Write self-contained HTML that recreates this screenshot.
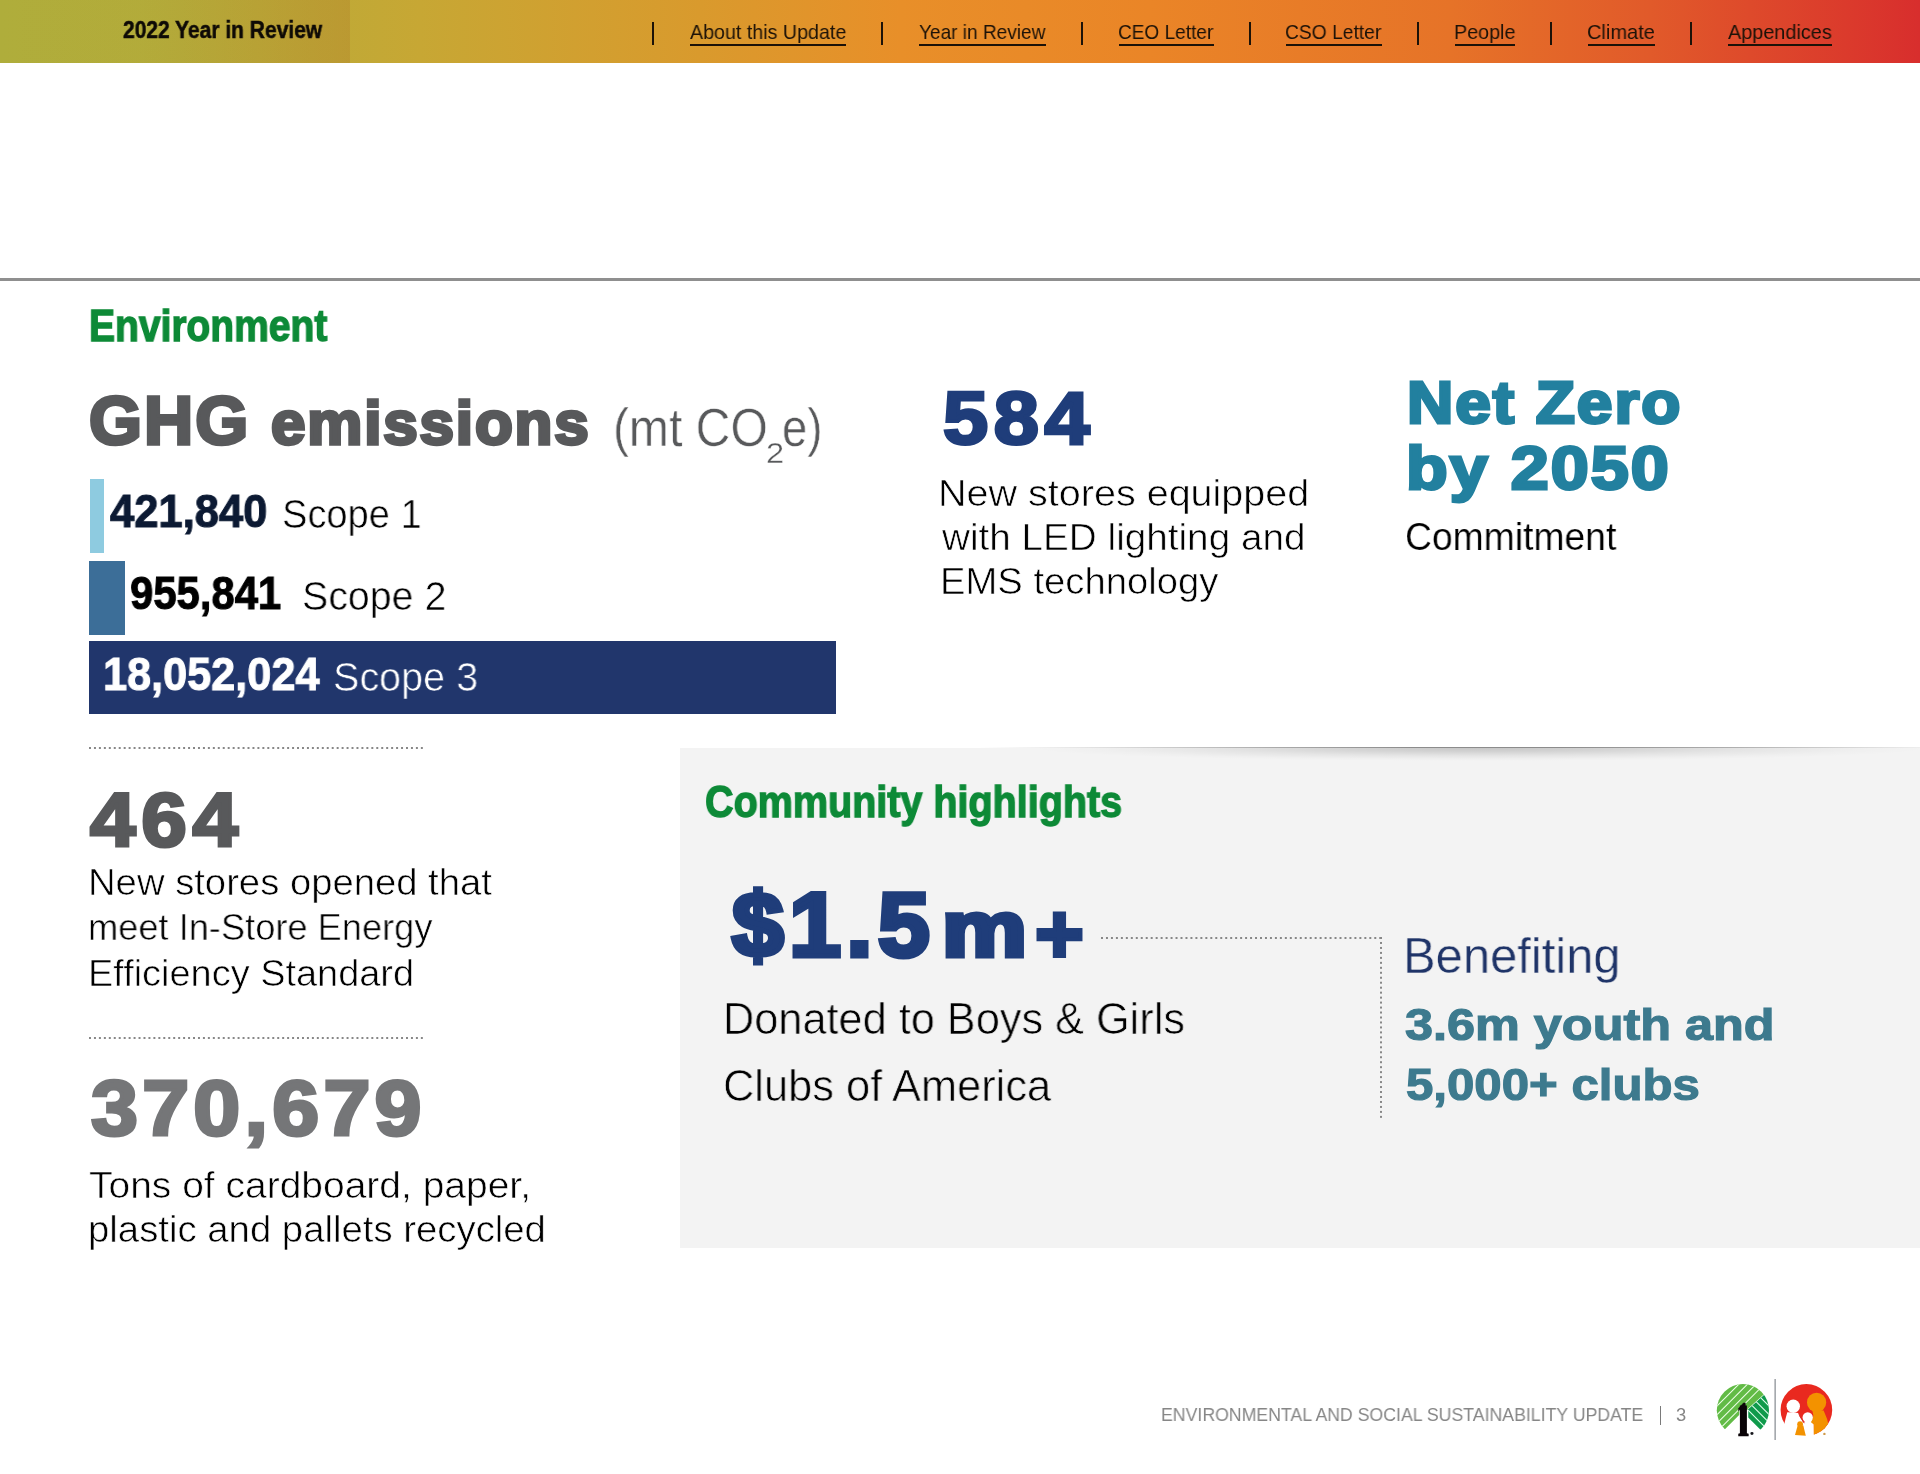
<!DOCTYPE html>
<html lang="en">
<head>
<meta charset="utf-8">
<title>2022 Year in Review - Environmental and Social Sustainability Update</title>
<style>
html,body{margin:0;padding:0;background:#fff;}
h1,h2,h3,p,nav,main,section,footer{margin:0;padding:0;font-size:inherit;font-weight:inherit;}
body{width:1920px;height:1474px;position:relative;overflow:hidden;font-family:"Liberation Sans",Arial,Helvetica,sans-serif;}
.t{position:absolute;white-space:nowrap;will-change:transform;transform-origin:0 0;margin:0;padding:0;font-weight:400;text-decoration:none;display:block;}
.abs{position:absolute;}
header{position:absolute;left:0;top:0;width:1920px;height:62.5px;
 background:linear-gradient(90deg,#afad3b 0px,#b4ac3a 180px,#bdaa37 300px,#c7a734 420px,#d99a2d 700px,#e88f29 900px,#ea8527 1150px,#e67328 1450px,#e15a2a 1650px,#db3a2c 1850px,#d82e2d 1920px);}
header .tab{position:absolute;left:0;top:0;width:350px;height:62.5px;background:linear-gradient(90deg,rgba(175,120,40,0) 0%,rgba(175,120,40,0.02) 40%,rgba(175,120,40,0.16) 70%,rgba(175,120,40,0.32) 100%);}
.pipe{position:absolute;top:22px;height:22.5px;width:2px;background:#1c1208;}
.ul{position:absolute;top:43.8px;height:2.2px;background:#1c1208;}
.rule{position:absolute;left:0;top:278px;width:1920px;height:3px;background:#8f8f8f;}
.dots{position:absolute;height:2px;background-image:linear-gradient(90deg,#878787 2px,rgba(135,135,135,0) 2px);background-size:5px 2px;background-repeat:repeat-x;}
.vdots{position:absolute;width:2px;background-image:linear-gradient(180deg,#878787 2px,rgba(135,135,135,0) 2px);background-size:2px 5px;background-repeat:repeat-y;}
.community{position:absolute;left:680px;top:748px;width:1240px;height:500px;background:#f3f3f3;overflow:hidden;}
.community .shade{position:absolute;left:350px;top:0;width:900px;height:13px;background:radial-gradient(ellipse 50% 100% at 50% 0%,rgba(0,0,0,0.19) 0%,rgba(0,0,0,0.13) 30%,rgba(0,0,0,0.06) 60%,rgba(0,0,0,0.015) 85%,rgba(0,0,0,0) 100%);}
.shadeline{position:absolute;left:980px;top:747px;width:940px;height:1px;background:linear-gradient(90deg,rgba(140,140,140,0) 0%,rgba(140,140,140,0.3) 14%,rgba(140,140,140,0.75) 32%,rgba(140,140,140,1) 46%,rgba(140,140,140,1) 62%,rgba(140,140,140,0.7) 80%,rgba(140,140,140,0.35) 93%,rgba(140,140,140,0.15) 100%);}
</style>
</head>
<body>
<header>
<div class="tab"></div>
<h1 class="t" style="left:122.89px;top:15.57px;font-size:23.69px;line-height:28.43px;color:#0e0a06;transform:scaleX(0.8860);font-weight:700;-webkit-text-stroke:0.5px #0e0a06;">2022 Year in Review</h1>
<nav>
<span class="pipe" style="left:651.50px"></span><a class="t nav" style="left:689.96px;top:18.76px;font-size:20.93px;line-height:25.12px;color:#1c1208;transform:scaleX(0.9400);">About this Update</a><span class="ul" style="left:689.5px;width:156.5px"></span>
<span class="pipe" style="left:880.75px"></span><a class="t nav" style="left:918.58px;top:18.76px;font-size:20.93px;line-height:25.12px;color:#1c1208;transform:scaleX(0.9102);">Year in Review</a><span class="ul" style="left:918.5px;width:127.0px"></span>
<span class="pipe" style="left:1080.75px"></span><a class="t nav" style="left:1118.03px;top:18.76px;font-size:20.93px;line-height:25.12px;color:#1c1208;transform:scaleX(0.9101);">CEO Letter</a><span class="ul" style="left:1118.5px;width:95.0px"></span>
<span class="pipe" style="left:1248.50px"></span><a class="t nav" style="left:1285.02px;top:18.76px;font-size:20.93px;line-height:25.12px;color:#1c1208;transform:scaleX(0.9198);">CSO Letter</a><span class="ul" style="left:1285.5px;width:96.0px"></span>
<span class="pipe" style="left:1417.00px"></span><a class="t nav" style="left:1453.88px;top:18.76px;font-size:20.93px;line-height:25.12px;color:#1c1208;transform:scaleX(0.9436);">People</a><span class="ul" style="left:1455.0px;width:60.0px"></span>
<span class="pipe" style="left:1550.00px"></span><a class="t nav" style="left:1586.98px;top:18.76px;font-size:20.93px;line-height:25.12px;color:#1c1208;transform:scaleX(0.9572);">Climate</a><span class="ul" style="left:1587.5px;width:67.0px"></span>
<span class="pipe" style="left:1690.00px"></span><a class="t nav" style="left:1727.96px;top:18.76px;font-size:20.93px;line-height:25.12px;color:#1c1208;transform:scaleX(0.9485);">Appendices</a><span class="ul" style="left:1727.5px;width:104.0px"></span>
</nav>
</header>
<main>
<div class="rule"></div>
<section class="environment">
<h2 class="t" style="left:89.01px;top:300.00px;font-size:44.13px;line-height:52.96px;color:#0d8a37;transform:scaleX(0.8837);font-weight:700;-webkit-text-stroke:1.4px #0d8a37;">Environment</h2>
<h3><span class="t" style="left:89.42px;top:380.31px;font-size:67.73px;line-height:81.28px;color:#58595b;transform:scaleX(1.0063);font-weight:700;letter-spacing:0.03em;-webkit-text-stroke:3.4px #58595b;">GHG</span> <span class="t" style="left:270.56px;top:387.30px;font-size:60.76px;line-height:72.91px;color:#58595b;transform:scaleX(1.0192);font-weight:700;letter-spacing:0.03em;-webkit-text-stroke:3.4px #58595b;">emissions</span></h3>
<span class="t" style="left:612.80px;top:394.73px;font-size:54.38px;line-height:65.25px;color:#58595b;transform:scaleX(0.8832);-webkit-text-stroke:0.5px #fff;">(mt CO</span><sub class="t" style="left:765.69px;top:435.66px;font-size:29.07px;line-height:34.89px;color:#58595b;transform:scaleX(1.1202);-webkit-text-stroke:0.3px #fff;">2</sub><span class="t" style="left:781.61px;top:394.73px;font-size:54.38px;line-height:65.25px;color:#58595b;transform:scaleX(0.8359);-webkit-text-stroke:0.5px #fff;">e)</span>
<div class="abs" style="left:90px;top:479px;width:14px;height:73.5px;background:#8ecbe0"></div>
<b class="t" style="left:109.82px;top:484.06px;font-size:45.90px;line-height:55.08px;color:#0c1a33;transform:scaleX(0.9492);font-weight:700;-webkit-text-stroke:1.0px #0c1a33;">421,840</b><span class="t" style="left:281.99px;top:490.91px;font-size:39.96px;line-height:47.96px;color:#000;transform:scaleX(0.9524);-webkit-text-stroke:0.6px #fff;">Scope 1</span>
<div class="abs" style="left:89px;top:561px;width:36px;height:73.5px;background:#3c6e98"></div>
<b class="t" style="left:130.00px;top:566.06px;font-size:46.61px;line-height:55.93px;color:#000;transform:scaleX(0.8975);font-weight:700;-webkit-text-stroke:1.0px #000;">955,841</b><span class="t" style="left:301.92px;top:572.91px;font-size:39.96px;line-height:47.96px;color:#000;transform:scaleX(0.9844);-webkit-text-stroke:0.6px #fff;">Scope 2</span>
<div class="abs" style="left:89px;top:641px;width:747px;height:73px;background:#21366c"></div>
<b class="t" style="left:102.75px;top:647.06px;font-size:45.90px;line-height:55.08px;color:#fff;transform:scaleX(0.9424);font-weight:700;-webkit-text-stroke:1.0px #fff;">18,052,024</b><span class="t" style="left:332.91px;top:653.91px;font-size:39.96px;line-height:47.96px;color:#fff;transform:scaleX(0.9897);-webkit-text-stroke:0.6px #21366c;">Scope 3</span>
<b class="t" style="left:943.00px;top:373.68px;font-size:74.58px;line-height:89.49px;color:#1f3d7a;transform:scaleX(1.0877);font-weight:700;letter-spacing:0.07em;-webkit-text-stroke:3.2px #1f3d7a;">584</b>
<p class="t" style="left:938.43px;top:471.81px;font-size:36.34px;line-height:43.61px;color:#000;transform:scaleX(1.0879);-webkit-text-stroke:0.6px #fff;">New stores equipped</p><p class="t" style="left:941.74px;top:515.81px;font-size:36.34px;line-height:43.61px;color:#000;transform:scaleX(1.0649);-webkit-text-stroke:0.6px #fff;">with LED lighting and</p><p class="t" style="left:939.55px;top:560.06px;font-size:36.34px;line-height:43.61px;color:#000;transform:scaleX(1.0518);-webkit-text-stroke:0.6px #fff;">EMS technology</p>
<b class="t" style="left:1406.85px;top:367.50px;font-size:58.51px;line-height:70.21px;color:#22809f;transform:scaleX(1.0957);font-weight:700;letter-spacing:0.03em;-webkit-text-stroke:3.0px #22809f;">Net Zero</b><b class="t" style="left:1405.95px;top:432.26px;font-size:60.32px;line-height:72.38px;color:#22809f;transform:scaleX(1.1311);font-weight:700;letter-spacing:0.03em;-webkit-text-stroke:3.0px #22809f;">by 2050</b><p class="t" style="left:1405.01px;top:514.04px;font-size:38.77px;line-height:46.52px;color:#000;transform:scaleX(0.9619);-webkit-text-stroke:0.2px #fff;">Commitment</p>
<div class="dots" style="left:89.4px;top:746.9px;width:334.5px;background-size:4.963px 2px"></div>
<b class="t" style="left:90.48px;top:773.91px;font-size:76.02px;line-height:91.22px;color:#58595b;transform:scaleX(1.0782);font-weight:700;letter-spacing:0.07em;-webkit-text-stroke:3.2px #58595b;">464</b>
<p class="t" style="left:87.80px;top:861.31px;font-size:36.69px;line-height:44.02px;color:#000;transform:scaleX(1.0428);-webkit-text-stroke:0.6px #fff;">New stores opened that</p><p class="t" style="left:88.30px;top:906.31px;font-size:36.69px;line-height:44.02px;color:#000;transform:scaleX(0.9882);-webkit-text-stroke:0.6px #fff;">meet In-Store Energy</p><p class="t" style="left:87.58px;top:951.81px;font-size:36.69px;line-height:44.02px;color:#000;transform:scaleX(1.0341);-webkit-text-stroke:0.6px #fff;">Efficiency Standard</p>
<div class="dots" style="left:89.4px;top:1037px;width:334.5px;background-size:4.963px 2px"></div>
<b class="t" style="left:90.81px;top:1062.46px;font-size:77.12px;line-height:92.54px;color:#757678;transform:scaleX(1.0950);font-weight:700;letter-spacing:0.05em;-webkit-text-stroke:3.2px #757678;">370,679</b>
<p class="t" style="left:88.61px;top:1163.71px;font-size:36.89px;line-height:44.27px;color:#000;transform:scaleX(1.0570);-webkit-text-stroke:0.6px #fff;">Tons of cardboard, paper,</p><p class="t" style="left:88.22px;top:1206.80px;font-size:37.03px;line-height:44.43px;color:#000;transform:scaleX(1.0352);-webkit-text-stroke:0.6px #fff;">plastic and pallets recycled</p>
</section>
<section class="community"><div class="shade"></div></section>
<div class="shadeline"></div>
<section>
<h2 class="t" style="left:704.76px;top:775.81px;font-size:43.85px;line-height:52.62px;color:#0d8a37;transform:scaleX(0.9015);font-weight:700;-webkit-text-stroke:1.4px #0d8a37;">Community highlights</h2>
<b><span class="t" style="left:732.35px;top:871.25px;font-size:90.12px;line-height:108.14px;color:#1f3d7a;transform:scaleX(1.0315);font-weight:700;letter-spacing:0.06em;-webkit-text-stroke:5.0px #1f3d7a;">$1.5</span><span class="t" style="left:941.79px;top:883.26px;font-size:77.52px;line-height:93.02px;color:#1f3d7a;transform:scaleX(1.2303);font-weight:700;-webkit-text-stroke:5.0px #1f3d7a;">m</span><span class="t" style="left:1034.50px;top:885.30px;font-size:83.20px;line-height:99.84px;color:#1f3d7a;transform:scaleX(1.0061);font-weight:700;-webkit-text-stroke:4.0px #1f3d7a;">+</span></b>
<div class="dots" style="left:1100.5px;top:936.5px;width:281.1px;background-size:4.984px 2px"></div>
<div class="vdots" style="left:1379.6px;top:936.5px;height:181px;background-size:2px 4.97px"></div>
<p class="t" style="left:722.61px;top:992.06px;font-size:44.27px;line-height:53.12px;color:#000;transform:scaleX(0.9780);-webkit-text-stroke:0.7px #f3f3f3;">Donated to Boys &amp; Girls</p><p class="t" style="left:723.15px;top:1059.16px;font-size:44.40px;line-height:53.29px;color:#000;transform:scaleX(0.9781);-webkit-text-stroke:0.7px #f3f3f3;">Clubs of America</p>
<p class="t" style="left:1403.29px;top:925.72px;font-size:50.42px;line-height:60.5px;color:#1f3468;transform:scaleX(0.9702);-webkit-text-stroke:0.4px #f3f3f3;">Benefiting</p><b class="t" style="left:1405.03px;top:999.17px;font-size:44.12px;line-height:52.94px;color:#3d7a8e;transform:scaleX(1.1423);font-weight:700;-webkit-text-stroke:1.2px #3d7a8e;">3.6m youth and</b><b class="t" style="left:1406.15px;top:1058.23px;font-size:44.21px;line-height:53.05px;color:#3d7a8e;transform:scaleX(1.1126);font-weight:700;-webkit-text-stroke:1.2px #3d7a8e;">5,000+ clubs</b>
</section>
</main>
<footer>
<span class="t" style="left:1160.80px;top:1404.81px;font-size:18.17px;line-height:21.8px;color:#868686;transform:scaleX(0.9748);">ENVIRONMENTAL AND SOCIAL SUSTAINABILITY UPDATE</span><span class="abs" style="left:1659.5px;top:1406px;width:1.8px;height:19px;background:#7a7a7a"></span><span class="t" style="left:1675.80px;top:1404.64px;font-size:17.66px;line-height:21.19px;color:#868686;transform:scaleX(1.0393);">3</span>
<svg class="abs" style="left:1710px;top:1376px;will-change:transform" width="130" height="68" viewBox="0 0 130 68" role="img" aria-label="Dollar Tree and Family Dollar logos">
<defs>
<clipPath id="dtc"><circle cx="32.9" cy="34.2" r="26.1"/></clipPath>
<clipPath id="dtl"><polygon points="4,64.2 30.4,37.8 37.6,37.8 37.6,33 65,8.2 65,-5 -5,-5 -5,64.2"/></clipPath>
<clipPath id="dtd"><polygon points="38.2,33.2 65,9 65,68.2 38.2,41.4"/></clipPath>
<clipPath id="fdc"><circle cx="96.4" cy="33.9" r="25.8"/></clipPath>
</defs>
<g clip-path="url(#dtc)">
 <g clip-path="url(#dtl)">
  <rect x="0" y="0" width="66" height="66" fill="#62bb46"/>
  <g stroke="#efffe9" stroke-width="1.05">
   <line x1="0" y1="37.1" x2="37.1" y2="0"/><line x1="0" y1="45.7" x2="45.7" y2="0"/><line x1="0" y1="54.2" x2="54.2" y2="0"/><line x1="0" y1="62.6" x2="62.6" y2="0"/>
  </g>
 </g>
 <g clip-path="url(#dtd)">
  <rect x="30" y="0" width="36" height="66" fill="#0f9a4b"/>
  <g stroke="#e4fff0" stroke-width="1.05">
   <line x1="30" y1="1" x2="70" y2="41"/><line x1="30" y1="9.5" x2="70" y2="49.5"/><line x1="30" y1="17.4" x2="70" y2="57.4"/><line x1="30" y1="26.1" x2="70" y2="66.1"/>
  </g>
 </g>
</g>
<rect x="29.3" y="34" width="8.8" height="24" fill="#fff"/>
<rect x="29.9" y="29.5" width="7" height="29.6" fill="#0b0508"/>
<text x="0" y="0" transform="translate(26.2,59.9) scale(0.545,1)" font-family="'Liberation Serif',serif" font-weight="700" font-size="50" fill="#0b0508" stroke="#0b0508" stroke-width="0.6">1</text>
<text x="39.4" y="58.9" font-family="'Liberation Serif',serif" font-weight="700" font-size="19.5" fill="#15151a">.</text>
<rect x="64.4" y="3" width="1.5" height="61" fill="#9da1a6"/>
<g>
 <circle cx="96.4" cy="33.9" r="25.8" fill="#e9291f"/>
 <path d="M77.3,36.2 Q75.6,42 74.2,48.4 L68,49.2 L68,64 L104,64 L103.8,47 L98,38 Q94,46.8 94.2,47 Q90.5,43.5 88.6,37 Z" fill="#fff"/>
 <g clip-path="url(#fdc)">
  <path d="M102,33 L103.4,39.5 L101,46.2 L103.8,48.6 L103.8,64 L124,64 L124,50 L118.3,48 L117.1,43 L113.6,34.6 Z" fill="#f39200"/>
 </g>
 <circle cx="83.25" cy="30.2" r="6.7" fill="#fff"/>
 <circle cx="97.7" cy="41.4" r="5.15" fill="#fff"/>
 <path d="M88.4,36.6 Q89.6,41.5 92.2,43.6 Q92.6,45.8 94.3,47.2" fill="none" stroke="#d42a22" stroke-width="0.8"/>
 <circle cx="106.6" cy="26.4" r="9.6" fill="#f39200"/>
 <circle cx="90.1" cy="48.2" r="2.9" fill="#f39200"/>
 <path d="M87.6,49.8 L93.3,49.4 L95.8,59.8 L85,59 Z" fill="#f39200"/>
 <circle cx="114.4" cy="57.9" r="1.2" fill="#cf9a4a"/>
</g>
</svg>
</footer>
</body>
</html>
